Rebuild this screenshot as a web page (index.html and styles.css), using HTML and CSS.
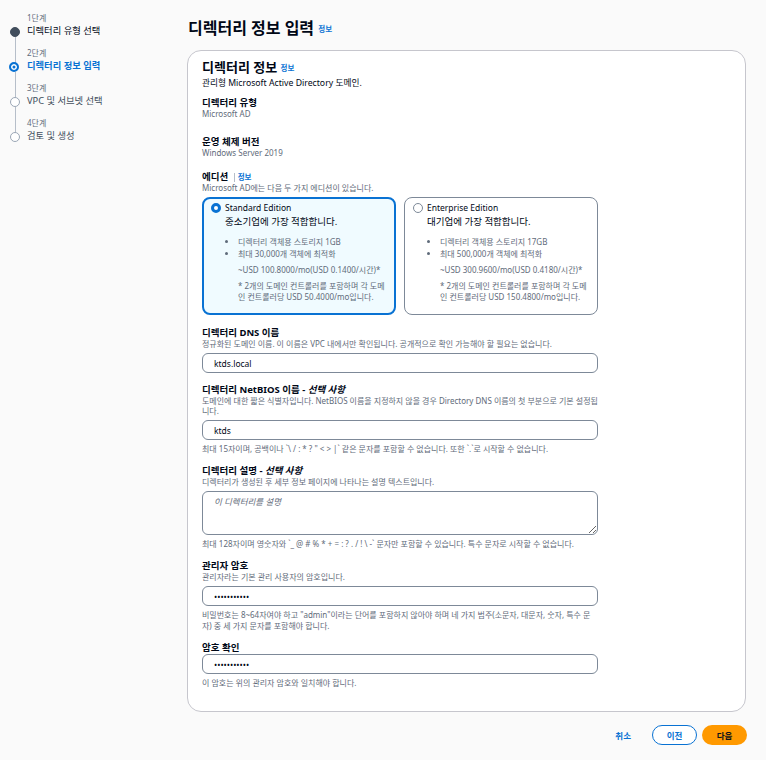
FILE: index.html
```html
<!DOCTYPE html>
<html lang="ko">
<head>
    <meta charset="UTF-8">
    <meta name="viewport" content="width=device-width, initial-scale=1.0">
    <title>디렉터리 정보 입력</title>
    <link rel="stylesheet" href="styles.css">
</head>
<body>

<div class="layout">
    <nav class="steps">
        <div class="step done">
            <span class="step-num">1단계</span>
            <span class="step-title">디렉터리 유형 선택</span>
        </div>
        <div class="step current">
            <span class="step-num">2단계</span>
            <span class="step-title">디렉터리 정보 입력</span>
        </div>
        <div class="step">
            <span class="step-num">3단계</span>
            <span class="step-title">VPC 및 서브넷 선택</span>
        </div>
        <div class="step last">
            <span class="step-num">4단계</span>
            <span class="step-title">검토 및 생성</span>
        </div>
    </nav>

    <main class="content">
        <h1 class="page-title">디렉터리 정보 입력 <a class="info" href="#">정보</a></h1>

        <section class="panel">
            <h2 class="panel-title">디렉터리 정보 <a class="info" href="#">정보</a></h2>
            <p class="panel-desc">관리형 Microsoft Active Directory 도메인.</p>

            <div class="field static">
                <div class="label">디렉터리 유형</div>
                <div class="value">Microsoft AD</div>
            </div>

            <div class="field static last-static">
                <div class="label">운영 체제 버전</div>
                <div class="value">Windows Server 2019</div>
            </div>

            <div class="field edition-field">
                <div class="label">에디션 <span class="divider"></span><a class="info" href="#">정보</a></div>
                <div class="desc">Microsoft AD에는 다음 두 가지 에디션이 있습니다.</div>
                <div class="editions">
                    <label class="edition selected">
                        <span class="radio"></span>
                        <span class="edition-body">
                            <span class="edition-name">Standard Edition</span>
                            <span class="edition-sub">중소기업에 가장 적합합니다.</span>
                            <ul>
                                <li>디렉터리 객체용 스토리지 1GB</li>
                                <li>최대 30,000개 객체에 최적화</li>
                            </ul>
                            <span class="edition-note price">~USD 100.8000/mo(USD 0.1400/시간)*</span>
                            <span class="edition-note">* 2개의 도메인 컨트롤러를 포함하며 각 도메인 컨트롤러당 USD 50.4000/mo입니다.</span>
                        </span>
                    </label>
                    <label class="edition">
                        <span class="radio"></span>
                        <span class="edition-body">
                            <span class="edition-name">Enterprise Edition</span>
                            <span class="edition-sub">대기업에 가장 적합합니다.</span>
                            <ul>
                                <li>디렉터리 객체용 스토리지 17GB</li>
                                <li>최대 500,000개 객체에 최적화</li>
                            </ul>
                            <span class="edition-note price">~USD 300.9600/mo(USD 0.4180/시간)*</span>
                            <span class="edition-note">* 2개의 도메인 컨트롤러를 포함하며 각 도메인 컨트롤러당 USD 150.4800/mo입니다.</span>
                        </span>
                    </label>
                </div>
            </div>

            <div class="field">
                <div class="label">디렉터리 DNS 이름</div>
                <div class="desc">정규화된 도메인 이름. 이 이름은 VPC 내에서만 확인됩니다. 공개적으로 확인 가능해야 할 필요는 없습니다.</div>
                <input class="input" type="text" value="ktds.local">
            </div>

            <div class="field">
                <div class="label">디렉터리 NetBIOS 이름 - <i>선택 사항</i></div>
                <div class="desc">도메인에 대한 짧은 식별자입니다. NetBIOS 이름을 지정하지 않을 경우 Directory DNS 이름의 첫 부분으로 기본 설정됩니다.</div>
                <input class="input" type="text" value="ktds">
                <div class="hint">최대 15자이며, 공백이나 `\ / : * ? " &lt; &gt; |` 같은 문자를 포함할 수 없습니다. 또한 `.`로 시작할 수 없습니다.</div>
            </div>

            <div class="field">
                <div class="label">디렉터리 설명 - <i>선택 사항</i></div>
                <div class="desc">디렉터리가 생성된 후 세부 정보 페이지에 나타나는 설명 텍스트입니다.</div>
                <textarea class="input textarea" placeholder="이 디렉터리를 설명"></textarea>
                <div class="hint">최대 128자이며 영숫자와 `_ @ # % * + = : ? . / ! \ -` 문자만 포함할 수 있습니다. 특수 문자로 시작할 수 없습니다.</div>
            </div>

            <div class="field">
                <div class="label">관리자 암호</div>
                <div class="desc">관리자라는 기본 관리 사용자의 암호입니다.</div>
                <input class="input" type="password" value="Ktds1234567">
                <div class="hint">비밀번호는 8~64자여야 하고 "admin"이라는 단어를 포함하지 않아야 하며 네 가지 범주(소문자, 대문자, 숫자, 특수 문자) 중 세 가지 문자를 포함해야 합니다.</div>
            </div>

            <div class="field">
                <div class="label">암호 확인</div>
                <input class="input" type="password" value="Ktds1234567">
                <div class="hint">이 암호는 위의 관리자 암호와 일치해야 합니다.</div>
            </div>
        </section>

        <div class="actions">
            <button class="btn-link">취소</button>
            <button class="btn-normal">이전</button>
            <button class="btn-primary">다음</button>
        </div>
    </main>
</div>

</body>
</html>
```

FILE: styles.css
```css
body {
    margin: 0;
    background-color: #fafafa;
    color: #000716;
    font-family: "Noto Sans", "Noto Sans CJK KR", sans-serif;
}

.layout {
    display: flex;
}

/* left wizard steps */
.steps {
    width: 177px;
    padding: 11px 0 0 10px;
}

.step {
    position: relative;
    display: flex;
    flex-direction: column;
    height: 35px;
    padding-left: 17px;
}

.step::before {
    content: "";
    position: absolute;
    left: 0;
    top: 16px;
    width: 8px;
    height: 8px;
    border: 1px solid #9ba7b6;
    border-radius: 50%;
    background-color: #fff;
    z-index: 1;
}

.step::after {
    content: "";
    position: absolute;
    left: 4.5px;
    top: 26px;
    width: 1px;
    height: 33px;
    background-color: #b6bec9;
}

.step.last::after {
    display: none;
}

.step.done::before {
    background-color: #414d5c;
    border-color: #414d5c;
}

.step.current::before {
    left: -1px;
    top: 16px;
    width: 6px;
    height: 6px;
    border: 2px solid #0972d3;
    background-color: #0972d3;
    box-shadow: inset 0 0 0 1.5px #fff;
}

.step-num {
    font-size: 8px;
    line-height: 13px;
    color: #5f6b7a;
}

.step-title {
    font-size: 9.3px;
    line-height: 13px;
    color: #000716;
}

.step.current .step-title {
    color: #0972d3;
    font-weight: 600;
}

.step:not(.done):not(.current) .step-title {
    color: #414d5c;
}

/* main column */
.content {
    width: 559px;
    padding-top: 16px;
}

.page-title {
    margin: 0 0 10px 1px;
    font-size: 16px;
    line-height: 24px;
    font-weight: 700;
}

.info {
    font-size: 7.5px;
    line-height: 1;
    font-weight: 700;
    color: #0972d3;
    text-decoration: none;
    vertical-align: middle;
}

.panel {
    background-color: #fff;
    border: 1px solid #c6c6cd;
    border-radius: 14px;
    padding: 8px 14px 12px;
}

.panel-title {
    margin: 0;
    font-size: 13px;
    line-height: 16px;
    font-weight: 700;
}

.panel-desc {
    margin: 2px 0 8px;
    font-size: 8.7px;
    line-height: 12px;
}

.field {
    max-width: 396px;
    margin-bottom: 11px;
}

.field.static {
    margin-bottom: 16.5px;
}

.field.last-static {
    margin-bottom: 12.5px;
}

.field.edition-field {
    margin-bottom: 12px;
}

.label {
    font-size: 9.5px;
    line-height: 12px;
    font-weight: 700;
}

.divider {
    display: inline-block;
    width: 1px;
    height: 9px;
    margin: 0 3px;
    background-color: #b6bec9;
    vertical-align: middle;
}

.value {
    font-size: 8px;
    line-height: 10.5px;
    color: #5f6b7a;
}

.desc {
    margin-bottom: 4px;
    font-size: 8px;
    line-height: 10px;
    color: #5f6b7a;
}

.hint {
    margin-top: 3px;
    font-size: 8px;
    line-height: 11px;
    color: #5f6b7a;
}

.input {
    display: block;
    box-sizing: border-box;
    width: 100%;
    height: 20px;
    padding: 0 11px;
    border: 1px solid #7d8998;
    border-radius: 6px;
    background-color: #fff;
    font-family: inherit;
    font-size: 8.5px;
    color: #000716;
}

.textarea {
    height: 44px;
    padding: 3px 11px;
    resize: vertical;
}

.textarea::placeholder {
    font-style: italic;
    color: #5f6b7a;
}

/* edition tiles */
.editions {
    display: grid;
    grid-template-columns: 1fr 1fr;
    gap: 8px;
    margin-top: 1px;
}

.edition {
    display: flex;
    gap: 4px;
    box-sizing: border-box;
    height: 118px;
    padding: 3px 10px 0 8px;
    border: 1px solid #7d8998;
    border-radius: 8px;
}

.edition.selected {
    border: 2px solid #0972d3;
    background-color: #f0fbff;
    padding: 2px 9px 0 7px;
}

.radio {
    flex: none;
    box-sizing: border-box;
    width: 10px;
    height: 10px;
    margin-top: 2px;
    border: 1px solid #7d8998;
    border-radius: 50%;
    background-color: #fff;
}

.edition.selected .radio {
    border: 3px solid #0972d3;
}

.edition-body {
    display: flex;
    flex-direction: column;
}

.edition-name {
    font-size: 8.5px;
    line-height: 13px;
    color: #000716;
}

.edition-sub {
    font-size: 9.5px;
    line-height: 16px;
    color: #000716;
}

.edition ul {
    margin: 6px 0 5px;
    padding-left: 13px;
    font-size: 8px;
    line-height: 12px;
    color: #5f6b7a;
}

.edition-note {
    margin-left: 13px;
    font-size: 8px;
    line-height: 11px;
    color: #5f6b7a;
}

.edition-note.price {
    line-height: 10.5px;
    margin-bottom: 4px;
}

/* footer buttons */
.actions {
    display: flex;
    justify-content: flex-end;
    align-items: center;
    gap: 5px;
    margin: 13px -1px 0 0;
}

.actions button {
    height: 20px;
    border-radius: 10px;
    font-family: inherit;
    font-size: 8.5px;
    font-weight: 700;
    cursor: pointer;
}

.btn-link {
    border: none;
    background: none;
    color: #0972d3;
    margin-right: 10px;
}

.btn-normal {
    width: 45px;
    border: 1.5px solid #0972d3;
    background-color: #fff;
    color: #0972d3;
}

.btn-primary {
    width: 45px;
    border: none;
    background-color: #ff9900;
    color: #0f141a;
}
```
